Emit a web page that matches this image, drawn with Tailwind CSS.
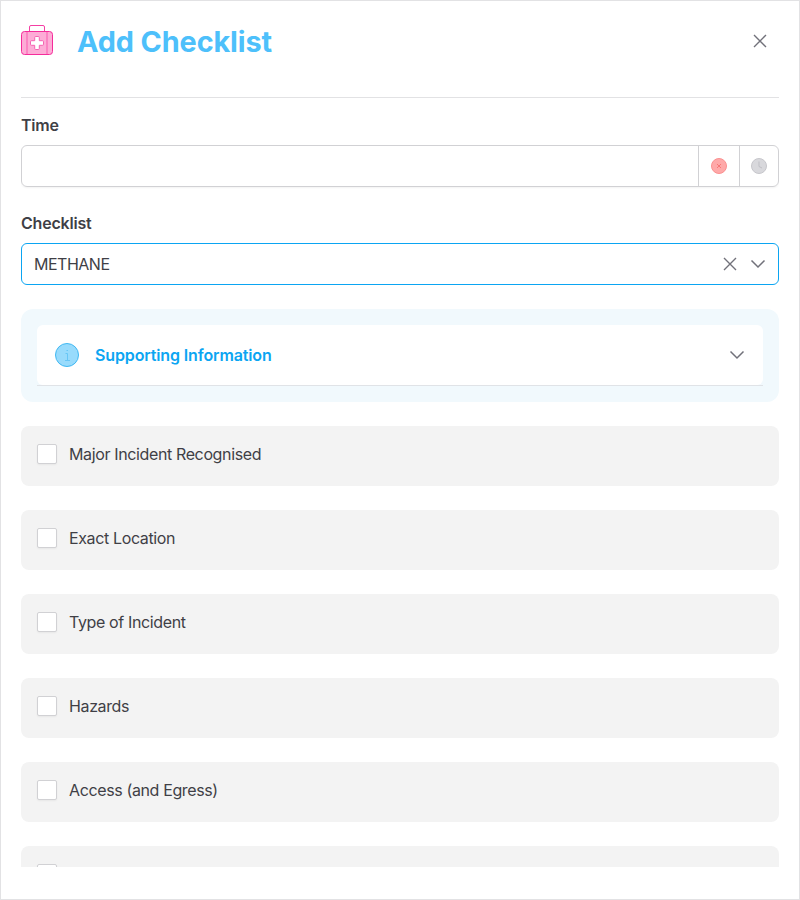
<!DOCTYPE html>
<html lang="en">
<head>
<meta charset="utf-8">
<title>Add Checklist</title>
<script src="https://cdn.jsdelivr.net/npm/@tailwindcss/browser@4"></script>
</head>
<body class="bg-white font-['Inter',sans-serif] text-base tracking-[-0.37px] text-[#3f3f46]">
<main class="flex h-[900px] w-[800px] flex-col border border-[#e2e2e4] px-5 pb-8">
  <header class="flex h-[97px] shrink-0 items-start border-b border-[#e2e2e4] pt-5">
    <svg class="mt-1 h-8 w-8 shrink-0" viewBox="0 0 32 32" fill="none">
      <rect x=".5" y="6.5" width="31" height="23" rx="3" fill="#fdacd6"/>
      <path d="M6 7v22M26 7v22" stroke="#fb83c3" stroke-width="2"/>
      <path d="M8.500 6.500V2q0-1.500 1.500-1.500h12q1.500 0 1.500 1.500v4.500" stroke="#f43fa4"/>
      <rect x=".5" y="6.500" width="31" height="23" rx="3" stroke="#f52c9b"/>
      <path d="M13.700 12.500q0-1 1-1h2.600q1 0 1 1v3.200h3.200q1 0 1 1v2.600q0 1-1 1h-3.200v3.200q0 1-1 1h-2.600q-1 0-1-1v-3.200h-3.200q-1 0-1-1v-2.600q0-1 1-1h3.200z" fill="#fff" stroke="#f562b2"/>
    </svg>
    <h1 class="ml-6 pt-px text-[28.8px] leading-10 font-bold tracking-[-0.1px] text-[#4dc0fb]">Add Checklist</h1>
    <button class="-mr-px ml-auto flex h-10 w-10 items-center justify-center" aria-label="Close">
      <svg class="h-4 w-4" viewBox="0 0 16 16" fill="none" stroke="#71717a" stroke-width="1.400"><path d="m2 2 12 12M14 2 2 14"/></svg>
    </button>
  </header>

  <div class="flex min-h-0 flex-1 flex-col overflow-hidden">
    <label class="mt-[15px] block h-6 shrink-0 leading-6 font-semibold tracking-[-0.25px]">Time</label>
    <div class="mt-2 flex h-[42px] shrink-0 rounded-[6px] border border-[#d1d1d4] shadow-xs">
      <div class="flex-1"></div>
      <button class="flex w-[41px] items-center justify-center border-l border-[#d1d1d4]" aria-label="Clear time">
        <svg class="h-4 w-4" viewBox="0 0 16 16" fill="none"><circle cx="8" cy="8" r="7.500" fill="#fea9a9" stroke="#fb9090"/><path d="m6 6 4 4M10 6l-4 4" stroke="#f77878"/></svg>
      </button>
      <button class="flex w-[39px] items-center justify-center border-l border-[#d1d1d4]" aria-label="Set to now">
        <svg class="h-4 w-4" viewBox="0 0 16 16" fill="none"><circle cx="8" cy="8" r="7.500" fill="#d8d8dc" stroke="#c6c6cb"/><path d="M8 3.500v5l3 1.500" stroke="#bfbfc5"/></svg>
      </button>
    </div>

    <label class="mt-6 block h-6 shrink-0 leading-6 font-semibold tracking-[-0.2px]">Checklist</label>
    <div class="mt-2 flex h-[42px] shrink-0 items-center rounded-[6px] border border-[#0ba5f2] pr-3 pl-3">
      <span class="flex-1 tracking-[-0.5px]">METHANE</span>
      <svg class="h-4 w-4" viewBox="0 0 16 16" fill="none" stroke="#71717a" stroke-width="1.400"><path d="m2 2 12 12M14 2 2 14"/></svg>
      <svg class="ml-3 h-4 w-4" viewBox="0 0 16 16" fill="none" stroke="#71717a" stroke-width="1.500"><path d="m1.500 4.500 6.500 6.500 6.500-6.500"/></svg>
    </div>

    <section class="mt-6 h-[93px] shrink-0 rounded-xl bg-[#f1f9fd] p-4">
      <div class="flex h-[61px] flex-col border-b border-[#e0e3e7]">
        <div class="flex flex-1 items-center rounded-[6px] bg-white px-[18px]">
          <svg class="h-6 w-6" viewBox="0 0 24 24" fill="none"><circle cx="12" cy="12" r="11.500" fill="#98dbfc" stroke="#41b8f2"/><path d="M10.500 10.500H12.500V17M10 17.500h5M11.500 7.500h1.500" stroke="#67c6f6"/></svg>
          <span class="ml-4 font-semibold tracking-[-0.13px] text-[#0ba5f2]">Supporting Information</span>
          <svg class="ml-auto h-4 w-4" viewBox="0 0 16 16" fill="none" stroke="#71717a" stroke-width="1.500"><path d="m1.500 4.500 6.500 6.500 6.500-6.500"/></svg>
        </div>
      </div>
    </section>

    <div class="mt-6 flex flex-col gap-6">
      <label class="flex h-[60px] shrink-0 items-start rounded-lg bg-[#f3f3f3] px-4 pt-4"><span class="mt-[2px] h-5 w-5 rounded-[2px] border border-[#d1d1d4] bg-white shadow-xs"></span><span class="ml-3 leading-6">Major Incident Recognised</span></label>
      <label class="flex h-[60px] shrink-0 items-start rounded-lg bg-[#f3f3f3] px-4 pt-4"><span class="mt-[2px] h-5 w-5 rounded-[2px] border border-[#d1d1d4] bg-white shadow-xs"></span><span class="ml-3 leading-6">Exact Location</span></label>
      <label class="flex h-[60px] shrink-0 items-start rounded-lg bg-[#f3f3f3] px-4 pt-4"><span class="mt-[2px] h-5 w-5 rounded-[2px] border border-[#d1d1d4] bg-white shadow-xs"></span><span class="ml-3 leading-6">Type of Incident</span></label>
      <label class="flex h-[60px] shrink-0 items-start rounded-lg bg-[#f3f3f3] px-4 pt-4"><span class="mt-[2px] h-5 w-5 rounded-[2px] border border-[#d1d1d4] bg-white shadow-xs"></span><span class="ml-3 leading-6">Hazards</span></label>
      <label class="flex h-[60px] shrink-0 items-start rounded-lg bg-[#f3f3f3] px-4 pt-4"><span class="mt-[2px] h-5 w-5 rounded-[2px] border border-[#d1d1d4] bg-white shadow-xs"></span><span class="ml-3 leading-6">Access (and Egress)</span></label>
      <div class="flex h-[60px] shrink-0 items-start rounded-lg bg-[#f3f3f3] px-4 pt-4"><span class="mt-[2px] h-5 w-5 rounded-[2px] border border-[#d1d1d4] bg-white shadow-xs"></span></div>
    </div>
  </div>
</main>
</body>
</html>
